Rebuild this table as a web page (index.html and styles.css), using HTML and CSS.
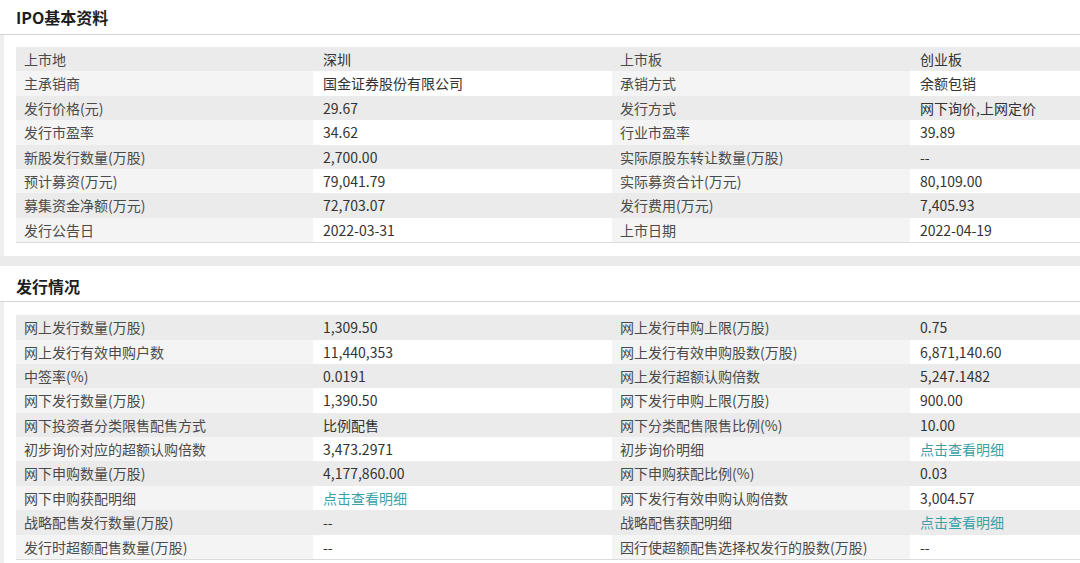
FILE: index.html
```html
<!DOCTYPE html>
<html lang="zh">
<head>
<meta charset="utf-8">
<title>IPO基本资料</title>
<link rel="stylesheet" href="styles.css">
</head>
<body>
<section class="panel">
  <h2 class="panel-title">IPO基本资料</h2>
  <div class="panel-body">
    <div class="grid">
      <div class="row"><span class="lab">上市地</span><span class="val">深圳</span><span class="lab">上市板</span><span class="val">创业板</span></div>
      <div class="row"><span class="lab">主承销商</span><span class="val">国金证券股份有限公司</span><span class="lab">承销方式</span><span class="val">余额包销</span></div>
      <div class="row"><span class="lab">发行价格(元)</span><span class="val">29.67</span><span class="lab">发行方式</span><span class="val">网下询价,上网定价</span></div>
      <div class="row"><span class="lab">发行市盈率</span><span class="val">34.62</span><span class="lab">行业市盈率</span><span class="val">39.89</span></div>
      <div class="row"><span class="lab">新股发行数量(万股)</span><span class="val">2,700.00</span><span class="lab">实际原股东转让数量(万股)</span><span class="val">--</span></div>
      <div class="row"><span class="lab">预计募资(万元)</span><span class="val">79,041.79</span><span class="lab">实际募资合计(万元)</span><span class="val">80,109.00</span></div>
      <div class="row"><span class="lab">募集资金净额(万元)</span><span class="val">72,703.07</span><span class="lab">发行费用(万元)</span><span class="val">7,405.93</span></div>
      <div class="row"><span class="lab">发行公告日</span><span class="val">2022-03-31</span><span class="lab">上市日期</span><span class="val">2022-04-19</span></div>
    </div>
  </div>
</section>
<section class="panel panel-second">
  <h2 class="panel-title">发行情况</h2>
  <div class="panel-body">
    <div class="grid">
      <div class="row"><span class="lab">网上发行数量(万股)</span><span class="val">1,309.50</span><span class="lab">网上发行申购上限(万股)</span><span class="val">0.75</span></div>
      <div class="row"><span class="lab">网上发行有效申购户数</span><span class="val">11,440,353</span><span class="lab">网上发行有效申购股数(万股)</span><span class="val">6,871,140.60</span></div>
      <div class="row"><span class="lab">中签率(%)</span><span class="val">0.0191</span><span class="lab">网上发行超额认购倍数</span><span class="val">5,247.1482</span></div>
      <div class="row"><span class="lab">网下发行数量(万股)</span><span class="val">1,390.50</span><span class="lab">网下发行申购上限(万股)</span><span class="val">900.00</span></div>
      <div class="row"><span class="lab">网下投资者分类限售配售方式</span><span class="val">比例配售</span><span class="lab">网下分类配售限售比例(%)</span><span class="val">10.00</span></div>
      <div class="row"><span class="lab">初步询价对应的超额认购倍数</span><span class="val">3,473.2971</span><span class="lab">初步询价明细</span><span class="val link">点击查看明细</span></div>
      <div class="row"><span class="lab">网下申购数量(万股)</span><span class="val">4,177,860.00</span><span class="lab">网下申购获配比例(%)</span><span class="val">0.03</span></div>
      <div class="row"><span class="lab">网下申购获配明细</span><span class="val link">点击查看明细</span><span class="lab">网下发行有效申购认购倍数</span><span class="val">3,004.57</span></div>
      <div class="row"><span class="lab">战略配售发行数量(万股)</span><span class="val">--</span><span class="lab">战略配售获配明细</span><span class="val link">点击查看明细</span></div>
      <div class="row"><span class="lab">发行时超额配售数量(万股)</span><span class="val">--</span><span class="lab">因行使超额配售选择权发行的股数(万股)</span><span class="val">--</span></div>
    </div>
  </div>
</section>
</body>
</html>
```

FILE: styles.css
```css
html, body {
  margin: 0;
  padding: 0;
  background: #ebebeb;
  overflow: hidden;
}
body {
  font-family: "Noto Sans CJK SC", "Noto Sans", sans-serif;
  font-size: 14px;
  color: #3a3a3a;
  width: 1080px;
  height: 563px;
}
.panel {
  background: #fff;
}
.panel-second {
  margin-top: 10px;
}
.panel-title {
  margin: 0;
  height: 34px;
  line-height: 34px;
  padding-left: 16px;
  font-size: 16px;
  font-weight: 700;
  color: #1e1e1e;
  border-bottom: 1px solid #d4d4d4;
  background: #fff;
}
.panel-second .panel-title {
  height: 35px;
  line-height: 41px;
}
.panel-body {
  border-left: 4px solid #eeeeee;
  padding: 12px 0 13px 12px;
}
.panel-second .panel-body {
  padding-top: 13px;
}
.grid {
  border-bottom: 1px solid #dcdcdc;
}
.row {
  display: grid;
  grid-template-columns: 297px 299px 298px 1fr;
  height: 24.4px;
  line-height: 24.4px;
  white-space: nowrap;
}
.lab {
  padding-left: 8px;
  background: #f4f4f4;
  color: #4a4a4a;
}
.val {
  padding-left: 10px;
  background: #fff;
  color: #333;
}
.row:nth-child(odd) .lab,
.row:nth-child(odd) .val {
  background: #ebebeb;
}
.link {
  color: #3aa0a8;
}
```
